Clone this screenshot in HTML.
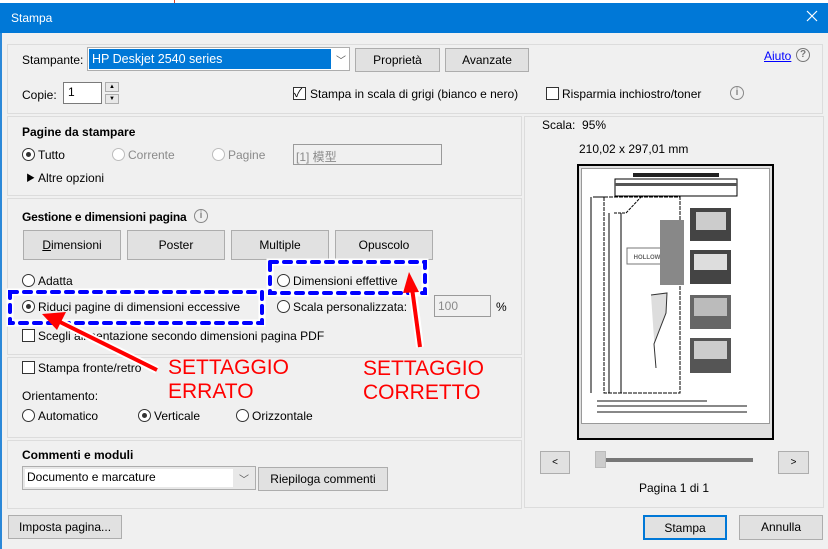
<!DOCTYPE html>
<html><head><meta charset="utf-8"><style>
*{box-sizing:border-box;margin:0;padding:0}
body{width:828px;height:549px;background:#f0f0f0;font-family:"Liberation Sans","Noto Sans CJK SC",sans-serif;font-size:12px;color:#000;position:relative;overflow:hidden}
.a{position:absolute;white-space:nowrap}
.panel{position:absolute;border:1px solid #dcdcdc}
.btn{position:absolute;background:#e1e1e1;border:1px solid #adadad;text-align:center;line-height:22px;font-size:12px}
.b{font-weight:bold}
.rad{position:absolute;width:13px;height:13px;border:1px solid #333;border-radius:50%;background:#fff}
.rad.on::after{content:"";position:absolute;left:3px;top:3px;width:5px;height:5px;border-radius:50%;background:#333}
.rad.dis{border-color:#bcbcbc}
.chk{position:absolute;width:13px;height:13px;border:1px solid #333;background:#fff}
.gray{color:#8a8a8a}
.red{color:#f00;font-size:21px;line-height:24px}
</style></head><body>
<div class="a" style="left:0;top:0;width:828px;height:3px;background:#fff"></div>
<div class="a" style="left:174px;top:0;width:1px;height:3px;background:#e04020"></div>
<div class="a" style="left:0;top:3px;width:828px;height:30px;background:#0078d7"></div>
<div class="a" style="left:11px;top:11px;color:#fff;font-size:12px">Stampa</div>
<svg class="a" style="left:806px;top:10px" width="12" height="12"><path d="M1 1L11 11M11 1L1 11" stroke="#fff" stroke-width="1.2"/></svg>
<div class="a" style="left:0;top:33px;width:2px;height:516px;background:#2b88d8"></div>

<div class="panel" style="left:7px;top:44px;width:816px;height:70px"></div>
<div class="a" style="left:22px;top:53px">Stampante:</div>
<div class="a" style="left:87px;top:47px;width:263px;height:24px;border:1px solid #adadad;background:#fff"></div>
<div class="a" style="left:89px;top:49px;width:242px;height:20px;background:#0078d7;color:#fff;line-height:20px;padding-left:3px;font-size:12.5px">HP Deskjet 2540 series</div>
<div class="a" style="left:336px;top:52px;color:#555;font-size:10px">﹀</div>
<div class="btn" style="left:355px;top:48px;width:85px;height:24px">Proprietà</div>
<div class="btn" style="left:445px;top:48px;width:84px;height:24px">Avanzate</div>
<div class="a" style="left:764px;top:49px;color:#00f;text-decoration:underline">Aiuto</div>
<div class="a" style="left:796px;top:48px;width:14px;height:14px;border:1.5px solid #777;border-radius:50%;color:#777;font-size:10px;text-align:center;line-height:12px;font-weight:bold">?</div>
<div class="a" style="left:22px;top:88px">Copie:</div>
<div class="a" style="left:63px;top:82px;width:39px;height:22px;border:1px solid #7a7a7a;background:#fff;padding:2px 4px">1</div>
<div class="a" style="left:105px;top:82px;width:14px;height:10px;border:1px solid #adadad;background:#e8e8e8;font-size:6px;text-align:center;line-height:8px">▲</div>
<div class="a" style="left:105px;top:94px;width:14px;height:10px;border:1px solid #adadad;background:#e8e8e8;font-size:6px;text-align:center;line-height:8px">▼</div>
<div class="chk" style="left:293px;top:87px"></div><div class="a" style="left:294px;top:84px;font-size:12px">✓</div>
<div class="a" style="left:310px;top:87px">Stampa in scala di grigi (bianco e nero)</div>
<div class="chk" style="left:546px;top:87px"></div>
<div class="a" style="left:562px;top:87px">Risparmia inchiostro/toner</div>
<div class="a" style="left:730px;top:86px;width:14px;height:14px;border:1.5px solid #888;border-radius:50%;color:#888;font-size:10px;text-align:center;line-height:12px;font-weight:bold">i</div>

<div class="panel" style="left:7px;top:116px;width:515px;height:80px"></div>
<div class="a b" style="left:22px;top:125px">Pagine da stampare</div>
<div class="rad on" style="left:22px;top:148px"></div><div class="a" style="left:38px;top:148px">Tutto</div>
<div class="rad dis" style="left:112px;top:148px"></div><div class="a gray" style="left:128px;top:148px">Corrente</div>
<div class="rad dis" style="left:212px;top:148px"></div><div class="a gray" style="left:228px;top:148px">Pagine</div>
<div class="a gray" style="left:293px;top:144px;width:149px;height:21px;border:1px solid #9a9a9a;background:#f0f0f0;padding:3px 2px">[1] 模型</div>
<div class="a" style="left:26px;top:171px;font-size:9px">▶</div><div class="a" style="left:38px;top:171px">Altre opzioni</div>

<div class="panel" style="left:7px;top:198px;width:515px;height:157px"></div>
<div class="a b" style="left:22px;top:210px;letter-spacing:-0.2px">Gestione e dimensioni pagina</div>
<div class="a" style="left:194px;top:209px;width:14px;height:14px;border:1.5px solid #888;border-radius:50%;color:#888;font-size:10px;text-align:center;line-height:12px;font-weight:bold">i</div>
<div class="btn" style="left:23px;top:230px;width:98px;height:30px;line-height:28px"><u>D</u>imensioni</div>
<div class="btn" style="left:127px;top:230px;width:98px;height:30px;line-height:28px">Poster</div>
<div class="btn" style="left:231px;top:230px;width:98px;height:30px;line-height:28px">Multiple</div>
<div class="btn" style="left:335px;top:230px;width:98px;height:30px;line-height:28px">Opuscolo</div>
<div class="rad" style="left:22px;top:274px"></div><div class="a" style="left:38px;top:274px">Adatta</div>
<div class="rad on" style="left:22px;top:300px"></div><div class="a" style="left:38px;top:300px">Riduci pagine di dimensioni eccessive</div>
<div class="chk" style="left:22px;top:329px"></div><div class="a" style="left:38px;top:329px">Scegli alimentazione secondo dimensioni pagina PDF</div>
<div class="rad" style="left:277px;top:274px"></div><div class="a" style="left:293px;top:274px">Dimensioni effettive</div>
<div class="rad" style="left:277px;top:300px"></div><div class="a" style="left:293px;top:300px">Scala personalizzata:</div>
<div class="a gray" style="left:434px;top:295px;width:57px;height:22px;border:1px solid #9a9a9a;padding:3px 3px">100</div>
<div class="a" style="left:496px;top:300px">%</div>

<div class="panel" style="left:7px;top:357px;width:515px;height:81px"></div>
<div class="chk" style="left:22px;top:361px"></div><div class="a" style="left:38px;top:361px">Stampa fronte/retro</div>
<div class="a" style="left:22px;top:389px">Orientamento:</div>
<div class="rad" style="left:22px;top:409px"></div><div class="a" style="left:38px;top:409px">Automatico</div>
<div class="rad on" style="left:138px;top:409px"></div><div class="a" style="left:154px;top:409px">Verticale</div>
<div class="rad" style="left:236px;top:409px"></div><div class="a" style="left:252px;top:409px">Orizzontale</div>

<div class="panel" style="left:7px;top:440px;width:515px;height:69px"></div>
<div class="a b" style="left:22px;top:448px">Commenti e moduli</div>
<div class="a" style="left:22px;top:466px;width:234px;height:24px;border:1px solid #adadad;background:#e8e8e8"></div>
<div class="a" style="left:25px;top:469px;width:208px;height:18px;background:#fff;padding:1px 2px">Documento e marcature</div>
<div class="a" style="left:239px;top:471px;color:#555;font-size:10px">﹀</div>
<div class="btn" style="left:258px;top:467px;width:130px;height:24px">Riepiloga commenti</div>
<div class="btn" style="left:8px;top:515px;width:114px;height:24px">Imposta pagina...</div>

<div class="panel" style="left:524px;top:116px;width:300px;height:392px"></div>
<div class="a" style="left:542px;top:118px">Scala:&nbsp; 95%</div>
<div class="a" style="left:579px;top:142px">210,02 x 297,01 mm</div>
<div class="a" style="left:577px;top:164px;width:197px;height:276px;border:2px solid #000;background:#e0e0e0"></div>
<div class="a" style="left:581px;top:168px;width:189px;height:256px;background:#fff;border:1px solid #999"></div>
<svg class="a" style="left:581px;top:168px" width="189" height="256" viewBox="0 0 189 256">
<rect x="52" y="5" width="86" height="4" fill="#222"/>
<rect x="34" y="11" width="122" height="17" fill="none" stroke="#000"/>
<rect x="34" y="15" width="122" height="3" fill="#555"/>
<path d="M23 29V225H99V29Z" fill="none" stroke="#000" stroke-dasharray="4 1"/>
<path d="M10 29V225M12 29H23" stroke="#000"/>
<path d="M33 45H45L60 29" stroke="#000" fill="none" stroke-dasharray="3 1"/>
<path d="M28 45V225M40 45V225" stroke="#000"/>
<rect x="46" y="80" width="40" height="16" fill="#fff" stroke="#777"/>
<text x="66" y="91" font-size="6" text-anchor="middle" fill="#666" font-weight="bold">HOLLOW</text>
<rect x="79" y="52" width="24" height="65" fill="#888"/>
<path d="M70 127L86 125L85 145L73 176L75 200" stroke="#333" fill="#ddd"/>
<rect x="109" y="40" width="41" height="33" fill="#444"/>
<rect x="109" y="82" width="41" height="34" fill="#444"/>
<rect x="109" y="127" width="41" height="34" fill="#666"/>
<rect x="109" y="170" width="41" height="35" fill="#555"/>
<rect x="115" y="44" width="30" height="18" fill="#ccc"/>
<rect x="113" y="86" width="33" height="16" fill="#ddd"/>
<rect x="113" y="130" width="33" height="18" fill="#bbb"/>
<rect x="113" y="173" width="33" height="18" fill="#ccc"/>
<rect x="16" y="232" width="110" height="2" fill="#888"/>
<rect x="16" y="237" width="150" height="2" fill="#888"/>
<rect x="16" y="243" width="150" height="2" fill="#888"/>
</svg>
<div class="btn" style="left:540px;top:451px;width:30px;height:23px;font-size:10px">&lt;</div>
<div class="a" style="left:601px;top:458px;width:152px;height:4px;background:#777"></div>
<div class="a" style="left:595px;top:451px;width:11px;height:17px;background:#ccc;border:1px solid #bbb"></div>
<div class="btn" style="left:778px;top:451px;width:31px;height:23px;font-size:10px">&gt;</div>
<div class="a" style="left:639px;top:481px">Pagina 1 di 1</div>
<div class="btn" style="left:643px;top:515px;width:84px;height:25px;border:2px solid #0078d7">Stampa</div>
<div class="btn" style="left:739px;top:515px;width:84px;height:25px">Annulla</div>

<svg class="a" style="left:0;top:0" width="828" height="549">
<g fill="none" stroke-linecap="round">
<path d="M10 292H262V323H10Z" stroke="#fff" stroke-width="7"/>
<path d="M10 292H262V323H10Z" stroke="#0000ff" stroke-width="4" stroke-dasharray="7 7"/>
<path d="M270 262H425V293H270Z" stroke="#fff" stroke-width="7"/>
<path d="M270 262H425V293H270Z" stroke="#0000ff" stroke-width="4" stroke-dasharray="7 7"/>
</g>
<g stroke="#fff" stroke-width="8" fill="#fff">
<path d="M157 370L60 322"/><path d="M420 347L412 285"/>
</g>
<path d="M157 370L60 322" stroke="#f00" stroke-width="4"/>
<path d="M42 314L66 312L57 330Z" fill="#f00"/>
<path d="M420 347L412 288" stroke="#f00" stroke-width="4"/>
<path d="M409 272L419 292L403 293Z" fill="#f00"/>
</svg>
<div class="a red" style="left:168px;top:356px">SETTAGGIO<br>ERRATO</div>
<div class="a red" style="left:363px;top:357px">SETTAGGIO<br>CORRETTO</div>
</body></html>
